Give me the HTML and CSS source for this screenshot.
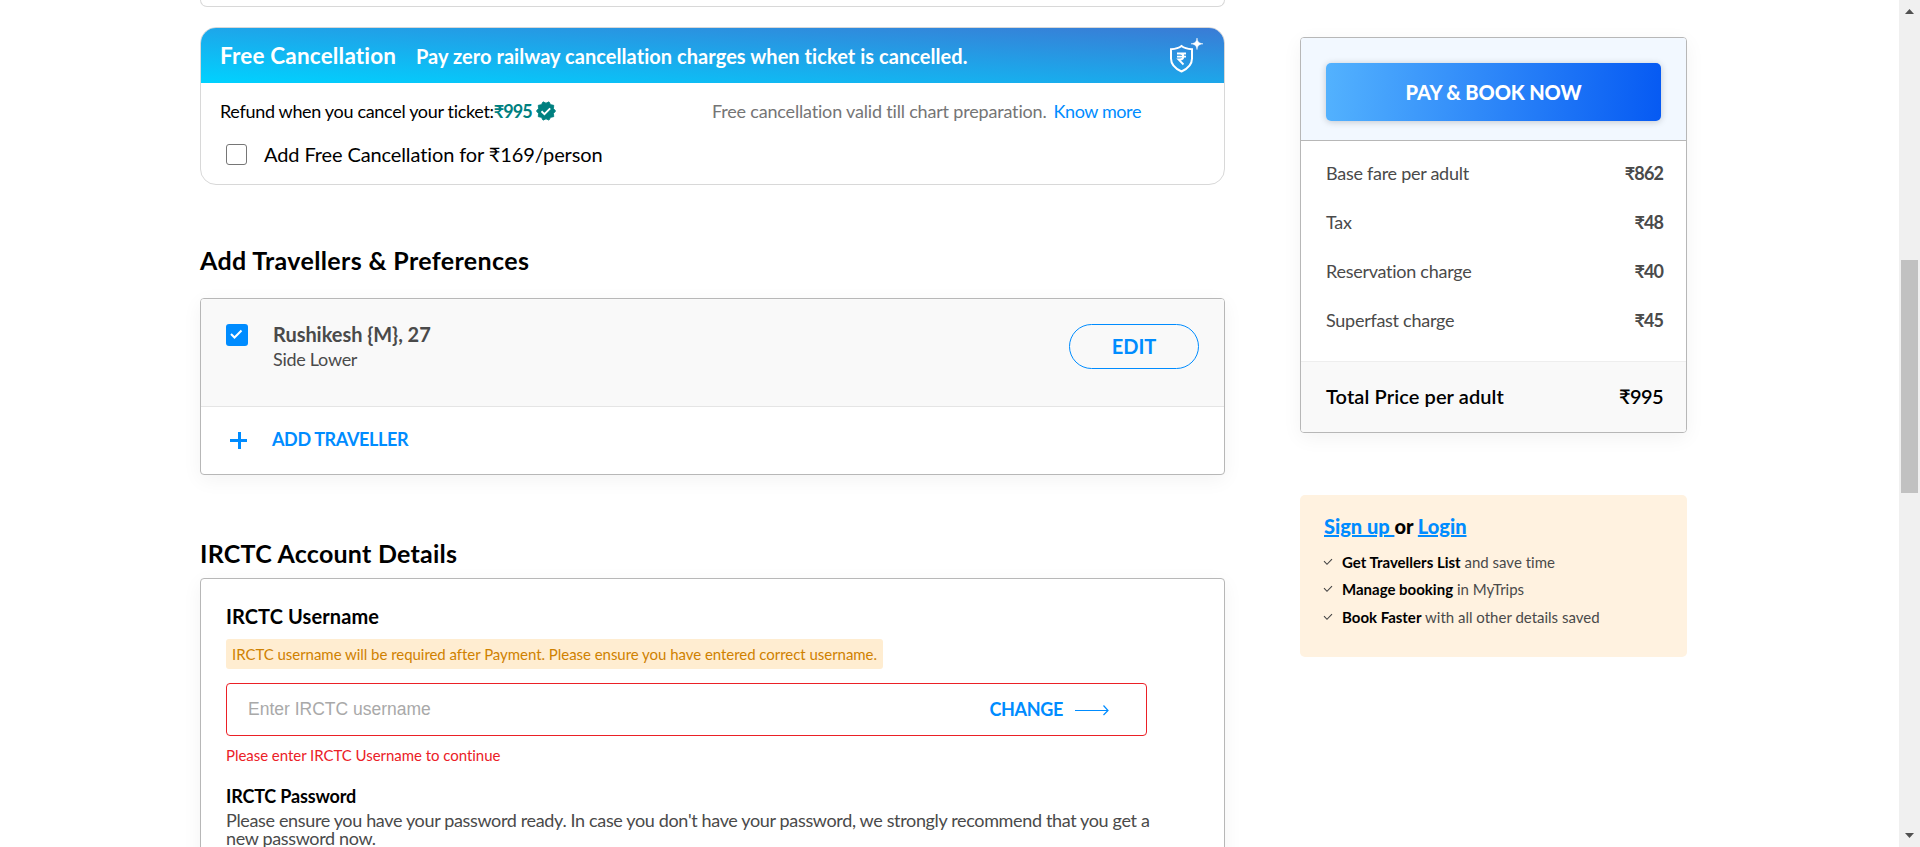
FILE: index.html
```
<!DOCTYPE html>
<html lang="en">
<head>
<meta charset="utf-8">
<title>Review booking</title>
<link rel="stylesheet" href="styles.css">
</head>
<body>
<div class="page">
  <main class="main">
    <section class="card card-prev"></section>
    <section class="card cancel">
      <header class="cancel-head">
        <span class="cancel-title">Free Cancellation</span>
        <span class="cancel-sub">Pay zero railway cancellation charges when ticket is cancelled.</span>
        <svg class="shield" width="34" height="36" viewBox="0 0 34 36" fill="none" stroke="#fff">
          <path d="M12.500 8 C9.500 10.500 6 11 2 11.300 V20.500 C2 27 7 31 12.500 33.500 C18 31 23 27 23 20.500 V11.300 C19 11 15.500 10.500 12.500 8 Z" stroke-width="2"/>
          <path d="M8 15.500 H17 M8 18.700 H17 M8.500 15.500 H11 C15.500 15.500 15.500 21.500 11 21.500 H9.500 L14.500 26.500" stroke-width="1.800"/>
          <path d="M28 0 C28.700 4 29.500 5 34 5.800 C29.500 6.600 28.700 7.600 28 11.600 C27.300 7.600 26.500 6.600 22 5.800 C26.500 5 27.300 4 28 0 Z" fill="#fff" stroke-width=".5"/>
        </svg>
      </header>
      <div class="cancel-row">
        <div class="refund"><span class="refund-label">Refund when you cancel your ticket:</span><b class="refund-amt">₹995</b>
          <svg class="badge" width="20" height="20" viewBox="0.5 0.500 23 23" fill="#008080"><path d="M23 12l-2.440-2.790.340-3.690-3.610-.820-1.890-3.200L12 2.960 8.600 1.500 6.710 4.690 3.100 5.500l.340 3.700L1 12l2.440 2.790-.340 3.700 3.610.820L8.600 22.500l3.400-1.470 3.400 1.460 1.890-3.190 3.610-.820-.340-3.690L23 12z" stroke="#008080" stroke-width="1" stroke-linejoin="round"/><path d="M6.800 12.300L10.200 15.600L16.800 8.900" fill="none" stroke="#fff" stroke-width="2.200"/></svg>
        </div>
        <div class="validity"><span class="valid-text">Free cancellation valid till chart preparation.</span><a class="know">Know more</a></div>
      </div>
      <label class="cancel-opt"><span class="box"></span><span class="opt-text">Add Free Cancellation for ₹169/person</span></label>
    </section>

    <h2 class="heading h-trav">Add Travellers &amp; Preferences</h2>
    <section class="panel travellers">
      <div class="trav">
        <span class="check"><svg width="14" height="12" viewBox="0 0 14 12"><path d="M1 5L4.500 8.500L11.500 1.500" fill="none" stroke="#fff" stroke-width="2"/></svg></span>
        <div class="trav-info"><div class="trav-name">Rushikesh {M}, 27</div><div class="trav-berth">Side Lower</div></div>
        <a class="edit">EDIT</a>
      </div>
      <div class="add"><svg width="17" height="17" viewBox="0 0 17 17"><path d="M0 8.500H17M9.500 0V17" stroke="#008cff" stroke-width="3"/></svg><span class="add-text">ADD TRAVELLER</span></div>
    </section>

    <h2 class="heading h-irctc">IRCTC Account Details</h2>
    <section class="panel account">
      <h3 class="user-title">IRCTC Username</h3>
      <div class="notice">IRCTC username will be required after Payment. Please ensure you have entered correct username.</div>
      <div class="field">
        <span class="placeholder">Enter IRCTC username</span>
        <span class="change">CHANGE</span>
        <svg width="34" height="12" viewBox="0 0 34 12" fill="none" stroke="#008cff" stroke-width="1.200"><path d="M0 6.500H33M28.500 1.500L33 6.500L28.500 11"/></svg>
      </div>
      <div class="error">Please enter IRCTC Username to continue</div>
      <h4 class="pass-title">IRCTC Password</h4>
      <p class="pass-text">Please ensure you have your password ready. In case you don't have your password, we strongly recommend that you get a<br>new password now.</p>
    </section>
  </main>

  <aside class="side">
    <section class="panel fare">
      <div class="fare-head"><a class="pay">PAY &amp; BOOK NOW</a></div>
      <div class="fare-rows">
        <div class="fare-row"><span>Base fare per adult</span><b>₹862</b></div>
        <div class="fare-row"><span>Tax</span><b>₹48</b></div>
        <div class="fare-row"><span>Reservation charge</span><b>₹40</b></div>
        <div class="fare-row"><span>Superfast charge</span><b>₹45</b></div>
      </div>
      <div class="total"><span>Total Price per adult</span><b>₹995</b></div>
    </section>
    <section class="signup">
      <div class="sign-title"><a>Sign up </a><span>or </span><a>Login</a></div>
      <ul class="perks">
        <li><svg width="10" height="8" viewBox="0 0 10 8"><path d="M1 3.200L4 6.300L9 1.200" fill="none" stroke="#444" stroke-width="1.100"/></svg><span><b>Get Travellers List</b> and save time</span></li>
        <li><svg width="10" height="8" viewBox="0 0 10 8"><path d="M1 3.200L4 6.300L9 1.200" fill="none" stroke="#444" stroke-width="1.100"/></svg><span><b>Manage booking</b> in MyTrips</span></li>
        <li><svg width="10" height="8" viewBox="0 0 10 8"><path d="M1 3.200L4 6.300L9 1.200" fill="none" stroke="#444" stroke-width="1.100"/></svg><span><b>Book Faster</b> with all other details saved</span></li>
      </ul>
    </section>
  </aside>

  <div class="scrollbar">
    <svg width="9" height="5" viewBox="0 0 9 5"><path d="M0 5L4.500 0L9 5Z" fill="#505050"/></svg>
    <span class="thumb"></span>
    <svg width="9" height="5" viewBox="0 0 9 5"><path d="M0 0L4.500 5L9 0Z" fill="#505050"/></svg>
  </div>
</div>
</body>
</html>
```
FILE: styles.css
```
* { box-sizing: border-box; }
body { margin: 0; font-family: Lato, "Liberation Sans", sans-serif; font-variant-ligatures: none; color: #000; background: #fff; }
h2, h3, h4, p, ul { margin: 0; padding: 0; }
.page { display: flex; height: 847px; overflow: hidden; }
.main { width: 1025px; margin-left: 200px; flex: none; }
.side { width: 387px; margin-left: 75px; padding-top: 37px; flex: none; }

.card { border: 1px solid #d8d8d8; border-radius: 16px; overflow: hidden; background: #fff; }
.card-prev { height: 7px; border-top: 0; border-radius: 0 0 16px 16px; }
.cancel { margin-top: 20px; height: 158px; }
.cancel-head { height: 55px; display: flex; align-items: flex-start; padding: 0 21px 0 19px; color: #fff; font-weight: 700; background: linear-gradient(to top right, #00d2ff, #3a7bd5); }
.cancel-title { font-size: 22.5px; line-height: 26px; margin-top: 15px; letter-spacing: .18px; width: 176px; white-space: nowrap; }
.cancel-sub { font-size: 20px; line-height: 26px; margin: 15px auto 0 20px; letter-spacing: .05px; }
.shield { margin-top: 10px; }
.cancel-row { display: flex; height: 56px; align-items: center; padding-left: 19px; font-size: 18px; }
.refund { display: flex; align-items: center; width: 492px; }
.refund-label { letter-spacing: -.32px; }
.refund-amt { color: #008080; letter-spacing: -.9px; }
.badge { margin-left: 4px; }
.valid-text { color: #757575; letter-spacing: -.18px; }
.know { color: #008cff; margin-left: 7px; letter-spacing: -.4px; }
.cancel-opt { display: flex; align-items: center; height: 30px; padding-left: 25px; font-size: 20px; }
.opt-text { letter-spacing: -.11px; }
.box { width: 21px; height: 21px; border: 1px solid #767676; border-radius: 3px; margin-right: 17px; }

.heading { font-size: 25px; line-height: 30px; font-weight: 700; letter-spacing: .25px; }
.h-trav { margin-top: 60px; letter-spacing: .36px; }
.h-irctc { margin-top: 63px; }
.panel { border: 1px solid #b7b7b7; border-radius: 4px; background: #fff; box-shadow: 0 5px 20px rgba(0,0,0,.05); overflow: hidden; }
.travellers { margin-top: 23px; height: 177px; }
.trav { height: 108px; background: #f9f9f9; border-bottom: 1px solid #e5e5e5; display: flex; align-items: flex-start; padding: 25px; color: #4a4a4a; }
.check { width: 22px; height: 22px; border-radius: 3px; background: #008cff; display: flex; align-items: center; justify-content: center; }
.trav-info { margin-left: 25px; flex: 1; }
.trav-name { font-size: 20px; line-height: 24px; font-weight: 700; margin-top: -2px; letter-spacing: -.05px; }
.trav-berth { font-size: 18px; line-height: 26px; letter-spacing: -.28px; }
.edit { width: 130px; height: 45px; border: 1px solid #008cff; border-radius: 23px; color: #008cff; font-size: 20px; font-weight: 700; display: flex; align-items: center; justify-content: center; padding-bottom: 1px; }
.add { height: 66px; display: flex; align-items: center; padding-left: 29px; color: #008cff; font-size: 18px; font-weight: 700; letter-spacing: -.38px; }
.add-text { margin-left: 25px; padding-bottom: 2px; }

.account { margin-top: 10px; height: 400px; padding: 24px 25px; }
.user-title { font-size: 20px; line-height: 26px; letter-spacing: .1px; }
.notice { width: 657px; height: 30px; margin-top: 10px; padding-left: 6px; border-radius: 3px; background: #ffedd1; color: #cf8100; font-size: 15px; line-height: 30px; letter-spacing: -.04px; }
.field { width: 921px; height: 53px; margin-top: 14px; border: 1px solid #eb2026; border-radius: 4px; display: flex; align-items: center; padding: 0 37px 0 21px; }
.placeholder { font-family: "Liberation Sans", sans-serif; font-size: 17.5px; color: #a9a9a9; flex: 1; }
.change { color: #008cff; font-size: 18px; font-weight: 700; letter-spacing: -.35px; margin-right: 12px; padding-bottom: 2px; }
.error { color: #eb2026; font-size: 15px; line-height: 20px; margin-top: 9px; letter-spacing: -.04px; }
.pass-title { font-size: 18px; line-height: 20px; margin-top: 21px; letter-spacing: -.17px; }
.pass-text { font-size: 18px; line-height: 18px; color: #4a4a4a; margin-top: 5px; white-space: nowrap; letter-spacing: -.35px; }

.fare { height: 396px; }
.fare-head { height: 103px; background: #f2f8ff; border-bottom: 1px solid #b7b7b7; padding: 25px; }
.pay { width: 335px; height: 58px; border-radius: 5px; color: #fff; font-size: 20px; font-weight: 900; letter-spacing: -.1px; background: linear-gradient(93deg, #53b2fe, #065af3); box-shadow: 0 1px 7px rgba(0,0,0,.2); display: flex; align-items: center; justify-content: center; }
.fare-rows { height: 220px; padding: 8px 23px 0 25px; }
.fare-row { display: flex; justify-content: space-between; align-items: center; height: 48.800px; font-size: 18px; letter-spacing: -.27px; color: #4a4a4a; }
.fare-row b { letter-spacing: -.9px; }
.total { height: 72px; background: #f9f9f9; border-top: 1px solid #eee; display: flex; justify-content: space-between; align-items: center; padding: 0 23px 3px 25px; font-size: 20px; font-weight: 600; letter-spacing: .1px; }
.total b { letter-spacing: -.6px; font-weight: 600; }
.signup { margin-top: 62px; height: 162px; border-radius: 5px; background: #fff2e0; padding: 18px 24px; }
.sign-title { font-size: 20px; line-height: 26px; font-weight: 900; white-space: pre; }
.sign-title a { color: #008cff; text-decoration: underline; }
.perks { list-style: none; margin-top: 9px; font-size: 15px; color: #4a4a4a; }
.perks li { display: flex; align-items: center; height: 27.500px; }
.perks svg { margin: 0 9px 0 -1px; }
.perks b { color: #000; }

.scrollbar { width: 21px; margin-left: auto; height: 847px; background: #f0f0f0; display: flex; flex-direction: column; align-items: center; padding: 9px 0; }
.scrollbar svg { flex: none; }
.thumb { width: 17px; height: 233px; margin: 246px 0 auto; background: #c1c1c1; }
```
